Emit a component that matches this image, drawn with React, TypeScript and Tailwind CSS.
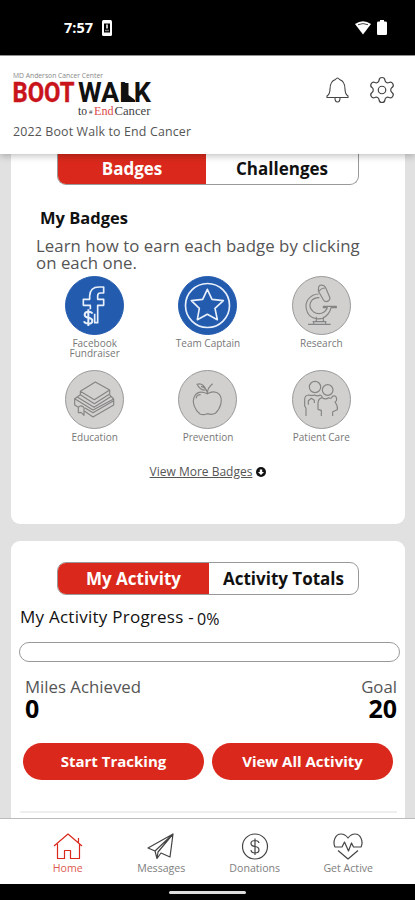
// src/App.tsx
import type { ReactNode } from 'react';
import { Settings } from 'lucide-react';

interface Badge {
  label: string;
  earned: boolean;
  icon: ReactNode;
}

const badges: Badge[] = [
  {
    label: 'Facebook Fundraiser',
    earned: true,
    icon: (
      <>
        <path d="M76 100V88H55V70H74V60Q75 33 102 33H116V51H106Q98 51 98 60V70H116V88H98V140H89V113" />
        <path d="M82 113Q80 107 71 107Q59 107 59 116Q59 123 70 125Q82 127 82 134Q82 143 70 143Q59 143 57 136M70 100V150" strokeWidth="6" />
      </>
    ),
  },
  {
    label: 'Team Captain',
    earned: true,
    icon: (
      <>
        <circle cx="88.500" cy="88.500" r="66" />
        <path d="M88 40L102 70L136 74L111 97L118 131L88 115L58 131L64 97L40 74L74 70Z" />
      </>
    ),
  },
  {
    label: 'Research',
    earned: false,
    icon: (
      <>
        <path d="M80 33Q82 25 93 28Q99 29 104 42L114 66Q113 75 104 77Q97 77 94 71L79 45ZM80 47Q88 36 99 36" />
        <path d="M80 54C54 55 38 76 43 99C49 130 87 139 108 114Q115 106 117 95H133V91H94V95H106C99 112 80 119 64 107C45 91 54 65 82 65M73 122V135L65 138V145M94 122V135L101 138V145M48 145H116M62 137H103" />
      </>
    ),
  },
  {
    label: 'Education',
    earned: false,
    icon: (
      <path d="M46 64L91 36L134 60L88 89ZM46 64V74L88 101L134 72V60M46 74L29 86L84 120L146 87L134 75M29 86V105L40 112M59 124L84 141L146 105V87M38 82L87 112L137 80M146 92L84 128L60 114M40 128V112Q48 103 57 113V136L49 128Z" />
    ),
  },
  {
    label: 'Prevention',
    earned: false,
    icon: (
      <>
        <path d="M88 71C74 65 58 64 50 78C40 96 51 121 66 132Q76 136 88 131Q101 136 112 130C128 116 136 88 124 73C114 62 98 65 88 71Z" />
        <path d="M57 43Q74 37 84 59Q69 65 57 43ZM69 49Q87 53 88 71Q88 53 104 41M55 85Q54 74 68 74" />
      </>
    ),
  },
  {
    label: 'Patient Care',
    earned: false,
    icon: (
      <>
        <circle cx="69" cy="51" r="17" />
        <circle cx="107" cy="60" r="16" />
        <path d="M42 138V115L38 108V87Q39 76 50 75Q61 78 68 75Q78 80 84 75Q90 77 91 82M49 104V92L58 85L67 91V99M88 138V121L78 118V99Q79 85 91 83Q101 90 110 83Q119 88 121 79Q131 74 134 86Q135 93 129 96Q138 108 136 119L122 125V138" />
      </>
    ),
  },
];

const navItems = [
  {
    label: 'Home',
    active: true,
    icon: <path d="M1 13L15 1L29 13M4.500 11V25.500H11.500V17.500H17.500V25.500H26.500V11M25.500 10V5" />,
  },
  {
    label: 'Messages',
    active: false,
    icon: <path d="M27 1L2 15L9 18L27 1L24 24L15 20L11 25.500L9 18M11 25.500L12 19L27 1" />,
  },
  {
    label: 'Donations',
    active: false,
    icon: (
      <>
        <circle cx="15" cy="13.500" r="12.500" />
        <path d="M19 10Q18.500 7.500 15 7.500Q11 7.500 11 10.500Q11 13 15 13.500Q19 14 19 17Q19 20 15 20Q11.200 20 11 17M15 5.500V22" />
      </>
    ),
  },
  {
    label: 'Get Active',
    active: false,
    icon: (
      <path d="M6 14H2C-.500 9 2 1 8 1Q12 1 15 5Q18 1 22 1C28 1 30.500 9 28 14H20.500L18.500 10L15.500 18L11.500 9L9 14H6M5 17.500L15 26L25 17.500" />
    ),
  },
];

function StatusBar() {
  return (
    <div className="flex h-14 shrink-0 items-center border-b border-[#999] bg-black pl-[64px] pr-[28px] text-white">
      <span className="text-[14.5px] font-bold">7:57</span>
      <svg className="ml-[8px]" width="12" height="16" viewBox="0 0 12 16">
        <rect x="1" y="0" width="10" height="16" rx="1.500" fill="#fff" />
        <path d="M3 3.500H9V12.500H3Z" fill="#000" />
        <path d="M6 4.500V8.500M4.500 10.500H5.500M6.500 10.500H7.500" stroke="#fff" strokeWidth="1.500" />
      </svg>
      <svg className="ml-auto" width="16" height="14" viewBox="0 0 16 14">
        <path d="M0 3Q8-2.500 16 3L8 13.500Z" fill="#fff" />
        <path d="M3 3.700Q8 1.500 13 3.700" stroke="#444" fill="none" />
      </svg>
      <svg className="ml-[6px]" width="10" height="15" viewBox="0 0 10 15">
        <path d="M3 0H7V1.500H9Q10 1.500 10 3V13.500Q10 15 9 15H1Q0 15 0 13.500V3Q0 1.500 1 1.500H3Z" fill="#fff" />
      </svg>
    </div>
  );
}

function Logo() {
  return (
    <svg width="145" height="48" viewBox="0 0 145 48" className="block">
      <text x="0" y="6.500" fontSize="7" fill="#888" textLength="90" lengthAdjust="spacingAndGlyphs">
        MD Anderson Cancer Center
      </text>
      <g fontFamily="Roboto" fontWeight="700" fontSize="27" strokeWidth="0.400">
        <text x="-0.500" y="31" fill="#c9141c" stroke="#c9141c" textLength="62" lengthAdjust="spacingAndGlyphs">BOOT</text>
        <text x="65" y="31" fill="#111" textLength="73" lengthAdjust="spacingAndGlyphs">WALK</text>
      </g>
      {/* boot silhouette that stands in for the foot of the L */}
      <path d="M108.500 12H115.500V24L122 29V31H115L113 29.500V31H108.500Z" fill="#111" />
      <g fontFamily="Liberation Serif" fontSize="13.500">
        <text x="65" y="44" fill="#333" textLength="9" lengthAdjust="spacingAndGlyphs">to</text>
        <text x="76" y="43" fontSize="7" fill="#333">#</text>
        <text x="81" y="44" fill="#dc4a4a" textLength="19.500" lengthAdjust="spacingAndGlyphs">End</text>
        <text x="101.500" y="44" fill="#444" textLength="36" lengthAdjust="spacingAndGlyphs">Cancer</text>
      </g>
    </svg>
  );
}

function Header() {
  return (
    <header className="relative z-10 flex h-[98px] shrink-0 justify-between bg-white pl-[13px] pr-[18px] shadow-[0_2px_7px_rgba(0,0,0,0.25)]">
      <div className="pt-[15px]">
        <Logo />
        <p className="mt-[4px] text-[12.4px] leading-[18px] tracking-[0.150px] text-[#555]">
          2022 Boot Walk to End Cancer
        </p>
      </div>
      <div className="flex items-start gap-[18px] pt-[19px]">
        <svg className="mt-[2px]" width="23" height="26" viewBox="0 0 23 26" fill="none" stroke="#444" strokeWidth="1.100">
          <path d="M9.500 2.500Q11.500-.500 13.500 2.500C18 4 19 7 19 12Q19 17 22 19V20.500H1V19Q4 17 4 12C4 7 5 4 9.500 2.500ZM9 21Q9 25 11.500 25T14 21" />
        </svg>
        <Settings size={30} strokeWidth={0.95} color="#444" />
      </div>
    </header>
  );
}

function BadgeItem({ badge }: { badge: Badge }) {
  return (
    <div className="flex flex-col items-center">
      <svg
        width="59"
        height="59"
        viewBox="0 0 177 177"
        fill="none"
        strokeWidth={badge.earned ? 5 : 3.5}
        stroke={badge.earned ? '#e8f0fb' : '#858585'}
        strokeLinejoin="round"
      >
        <circle
          cx="88.500"
          cy="88.500"
          r="87"
          strokeWidth="3"
          fill={badge.earned ? '#235bae' : '#d1d0ce'}
          stroke={badge.earned ? '#235bae' : '#999'}
        />
        {badge.icon}
      </svg>
      <span className="mt-[3px] w-[70px] text-center text-[10px] leading-[10px] text-[#777]">{badge.label}</span>
    </div>
  );
}

function App() {
  return (
    <div className="flex h-[900px] w-[415px] flex-col overflow-hidden bg-[#e1e1e1] font-['Open_Sans',sans-serif] text-[#111]">
      <StatusBar />
      <Header />

      <main className="min-h-0 flex-1 overflow-hidden pl-[11px] pr-[10px]">
        <section className="h-[370px] rounded-b-[9px] bg-white">
          <div className="ml-[46px] flex h-[31px] w-[302px] overflow-hidden rounded-b-[9px] border border-t-0 border-[#999] text-[17px] font-bold leading-[28px]">
            <button className="w-[148px] bg-[#da291c] text-white">Badges</button>
            <button className="flex-1">Challenges</button>
          </div>
          <h2 className="ml-[29px] mt-[22px] text-[16.5px] font-bold leading-[22px]">My Badges</h2>
          <p className="ml-[25px] mt-[8px] w-[340px] text-[16.8px] leading-[17px] tracking-[0.050px] text-[#555]">
            Learn how to earn each badge by clicking on each one.
          </p>
          <div className="mx-[27px] mt-[5px] grid auto-rows-[94px] grid-cols-3">
            {badges.map(badge => (
              <BadgeItem key={badge.label} badge={badge} />
            ))}
          </div>
          <div className="flex items-center justify-center gap-[4px] text-[12px] leading-[16px] text-[#555]">
            <span className="underline">View More Badges</span>
            <svg width="10" height="10" viewBox="0 0 10 10">
              <circle cx="5" cy="5" r="5" fill="#111" />
              <path d="M3.800 2.500H6.200V5H8L5 8L2 5H3.800Z" fill="#fff" />
            </svg>
          </div>
        </section>

        <section className="mt-[17px] h-[290px] rounded-t-[9px] bg-white pt-[21px]">
          <div className="ml-[46px] flex h-[33px] w-[302px] overflow-hidden rounded-[9px] border border-[#999] text-[17px] font-bold leading-[31px]">
            <button className="w-[151px] bg-[#da291c] text-white">My Activity</button>
            <button className="flex-1">Activity Totals</button>
          </div>
          <div className="ml-[9px] mt-[11px] flex h-[22px] items-center gap-[3px] text-[17px] font-medium leading-[22px] tracking-[0.250px]">
            <span>My Activity Progress -</span>
            <span className="pt-[3px] text-[16px] font-normal">0%</span>
          </div>
          <div className="ml-[8px] mt-[14px] h-[20px] w-[381px] rounded-full border border-[#999]" />
          <div className="ml-[14px] mr-[8px] mt-[15px] flex justify-between text-[16.8px] leading-[20px] text-[#555]">
            <div>
              <p>Miles Achieved</p>
              <p className="-mt-px text-[25px] font-bold leading-[24px] text-black">0</p>
            </div>
            <div className="text-right">
              <p>Goal</p>
              <p className="-mt-px text-[25px] font-bold leading-[24px] text-black">20</p>
            </div>
          </div>
          <div className="ml-[12px] mt-[23px] flex gap-[8px] text-[15px] font-bold text-white">
            <button className="h-[37px] w-[181px] rounded-full bg-[#da291c]">Start Tracking</button>
            <button className="h-[37px] w-[181px] rounded-full bg-[#da291c]">View All Activity</button>
          </div>
          <div className="ml-[9px] mr-[8px] mt-[31px] h-[2px] bg-[#eee]" />
        </section>
      </main>

      <nav className="flex h-[66px] shrink-0 border-t border-[#bbb] bg-white pl-[21px] pr-[20px] pt-[14px]">
        {navItems.map(item => (
          <div
            key={item.label}
            className={`flex flex-1 flex-col items-center ${item.active ? 'text-[#da291c]' : 'text-[#444]'}`}
          >
            <svg width="30" height="27" viewBox="0 0 30 27" fill="none" stroke="currentColor" strokeWidth="1.200" strokeLinejoin="round">
              {item.icon}
            </svg>
            <span className={`mt-[1px] text-[10.6px] leading-[14px] ${item.active ? 'text-[#dc5a50]' : 'text-[#808080]'}`}>
              {item.label}
            </span>
          </div>
        ))}
      </nav>
      <div className="flex h-[16px] shrink-0 justify-center bg-black pt-[7px]">
        <div className="h-[3px] w-[77px] rounded-full bg-[#ddd]" />
      </div>
    </div>
  );
}

export default App;
